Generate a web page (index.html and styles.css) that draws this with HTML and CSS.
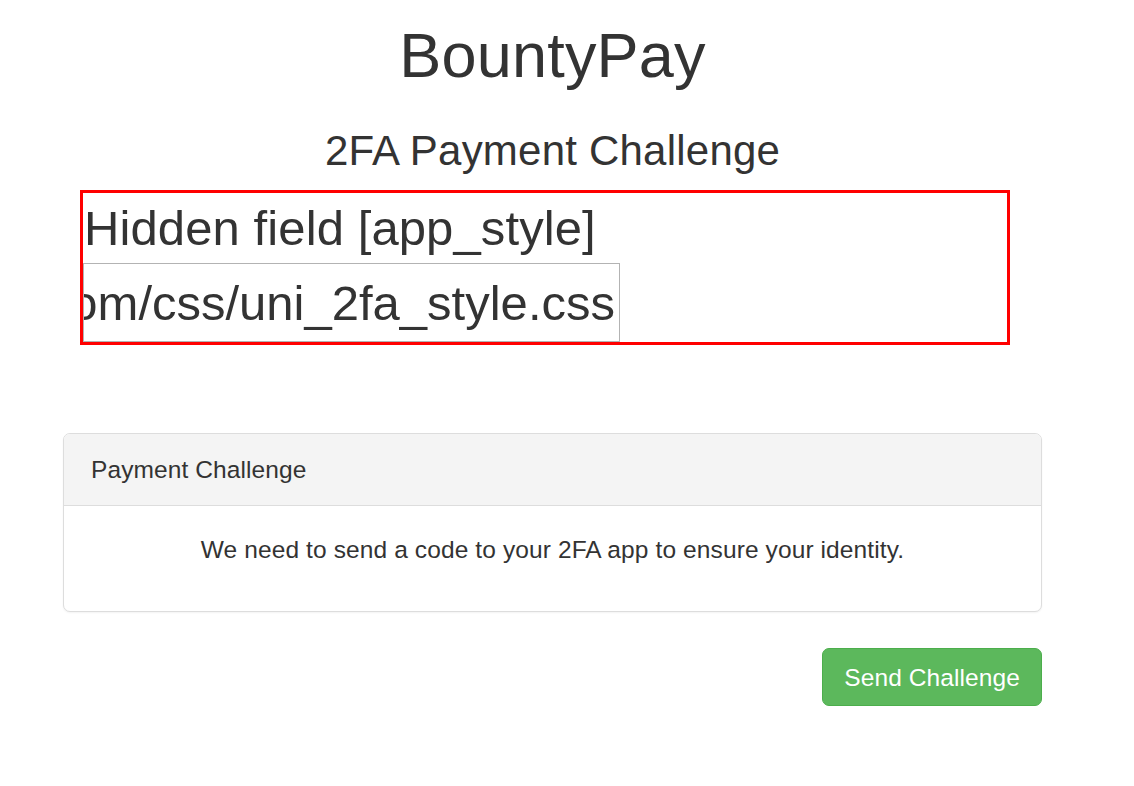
FILE: index.html
```html
<!DOCTYPE html>
<html lang="en">
<head>
<meta charset="utf-8">
<title>BountyPay - 2FA Payment Challenge</title>
<link rel="stylesheet" href="styles.css">
</head>
<body>
<div class="container">
  <h1 class="brand">BountyPay</h1>
  <h2 class="subtitle">2FA Payment Challenge</h2>
  <div class="debug-box">
    <div class="debug-label">Hidden field [app_style]</div>
    <div class="debug-input"><span class="debug-value">https://www.bountypay.h1ctf.com/css/uni_2fa_style.css</span></div>
  </div>
  <div class="panel">
    <div class="panel-heading">Payment Challenge</div>
    <div class="panel-body">
      <p class="panel-text">We need to send a code to your 2FA app to ensure your identity.</p>
    </div>
  </div>
  <div class="actions">
    <button class="btn-success" type="button">Send Challenge</button>
  </div>
</div>
</body>
</html>
```

FILE: styles.css
```css
html, body {
  margin: 0;
  padding: 0;
  background: #ffffff;
}

body {
  font-family: "Liberation Sans", Arial, Helvetica, sans-serif;
  color: #333333;
}

.container {
  margin-left: 63px;
  width: 979px;
  padding-top: 21px;
}

.brand {
  margin: 0;
  font-size: 63px;
  font-weight: 400;
  line-height: 69px;
  text-align: center;
  letter-spacing: 0.2px;
}

.subtitle {
  margin: 38px 0 0 0;
  font-size: 42px;
  font-weight: 400;
  line-height: 46px;
  text-align: center;
  letter-spacing: 0.22px;
}

.debug-box {
  margin: 16px 0 0 17px;
  width: 930px;
  box-sizing: border-box;
  border: 3px solid #ff0000;
  height: 155px;
}

.debug-label {
  font-size: 49px;
  line-height: 70px;
  padding-left: 1px;
  white-space: nowrap;
  letter-spacing: 0.1px;
}

.debug-input {
  width: 537px;
  height: 79px;
  box-sizing: border-box;
  border: 1px solid #b3b3b3;
  display: flex;
  justify-content: flex-end;
  align-items: center;
  overflow: hidden;
  padding-right: 4px;
}

.debug-value {
  flex: none;
  font-size: 49px;
  line-height: 56px;
  white-space: nowrap;
}

.panel {
  margin-top: 88px;
  border: 1px solid #dddddd;
  border-radius: 7px;
  background: #ffffff;
  box-shadow: 0 1px 2px rgba(0, 0, 0, 0.05);
}

.panel-heading {
  background: #f4f4f4;
  border-bottom: 1px solid #dddddd;
  border-radius: 6px 6px 0 0;
  height: 71px;
  line-height: 71px;
  padding: 0 27px;
  font-size: 24.5px;
  letter-spacing: 0.1px;
}

.panel-body {
  padding: 26.25px;
}

.panel-text {
  margin: 0 0 17.5px 0;
  font-size: 24.5px;
  line-height: 35px;
  text-align: center;
  letter-spacing: 0.11px;
}

.actions {
  display: flex;
  justify-content: flex-end;
  margin-top: 36px;
}

.btn-success {
  font-family: "Liberation Sans", Arial, Helvetica, sans-serif;
  font-size: 24.5px;
  line-height: 35px;
  padding: 10.5px 21px;
  color: #ffffff;
  background: #5cb85c;
  border: 1.75px solid #4cae4c;
  border-radius: 7px;
  letter-spacing: 0.1px;
  cursor: pointer;
}
```
